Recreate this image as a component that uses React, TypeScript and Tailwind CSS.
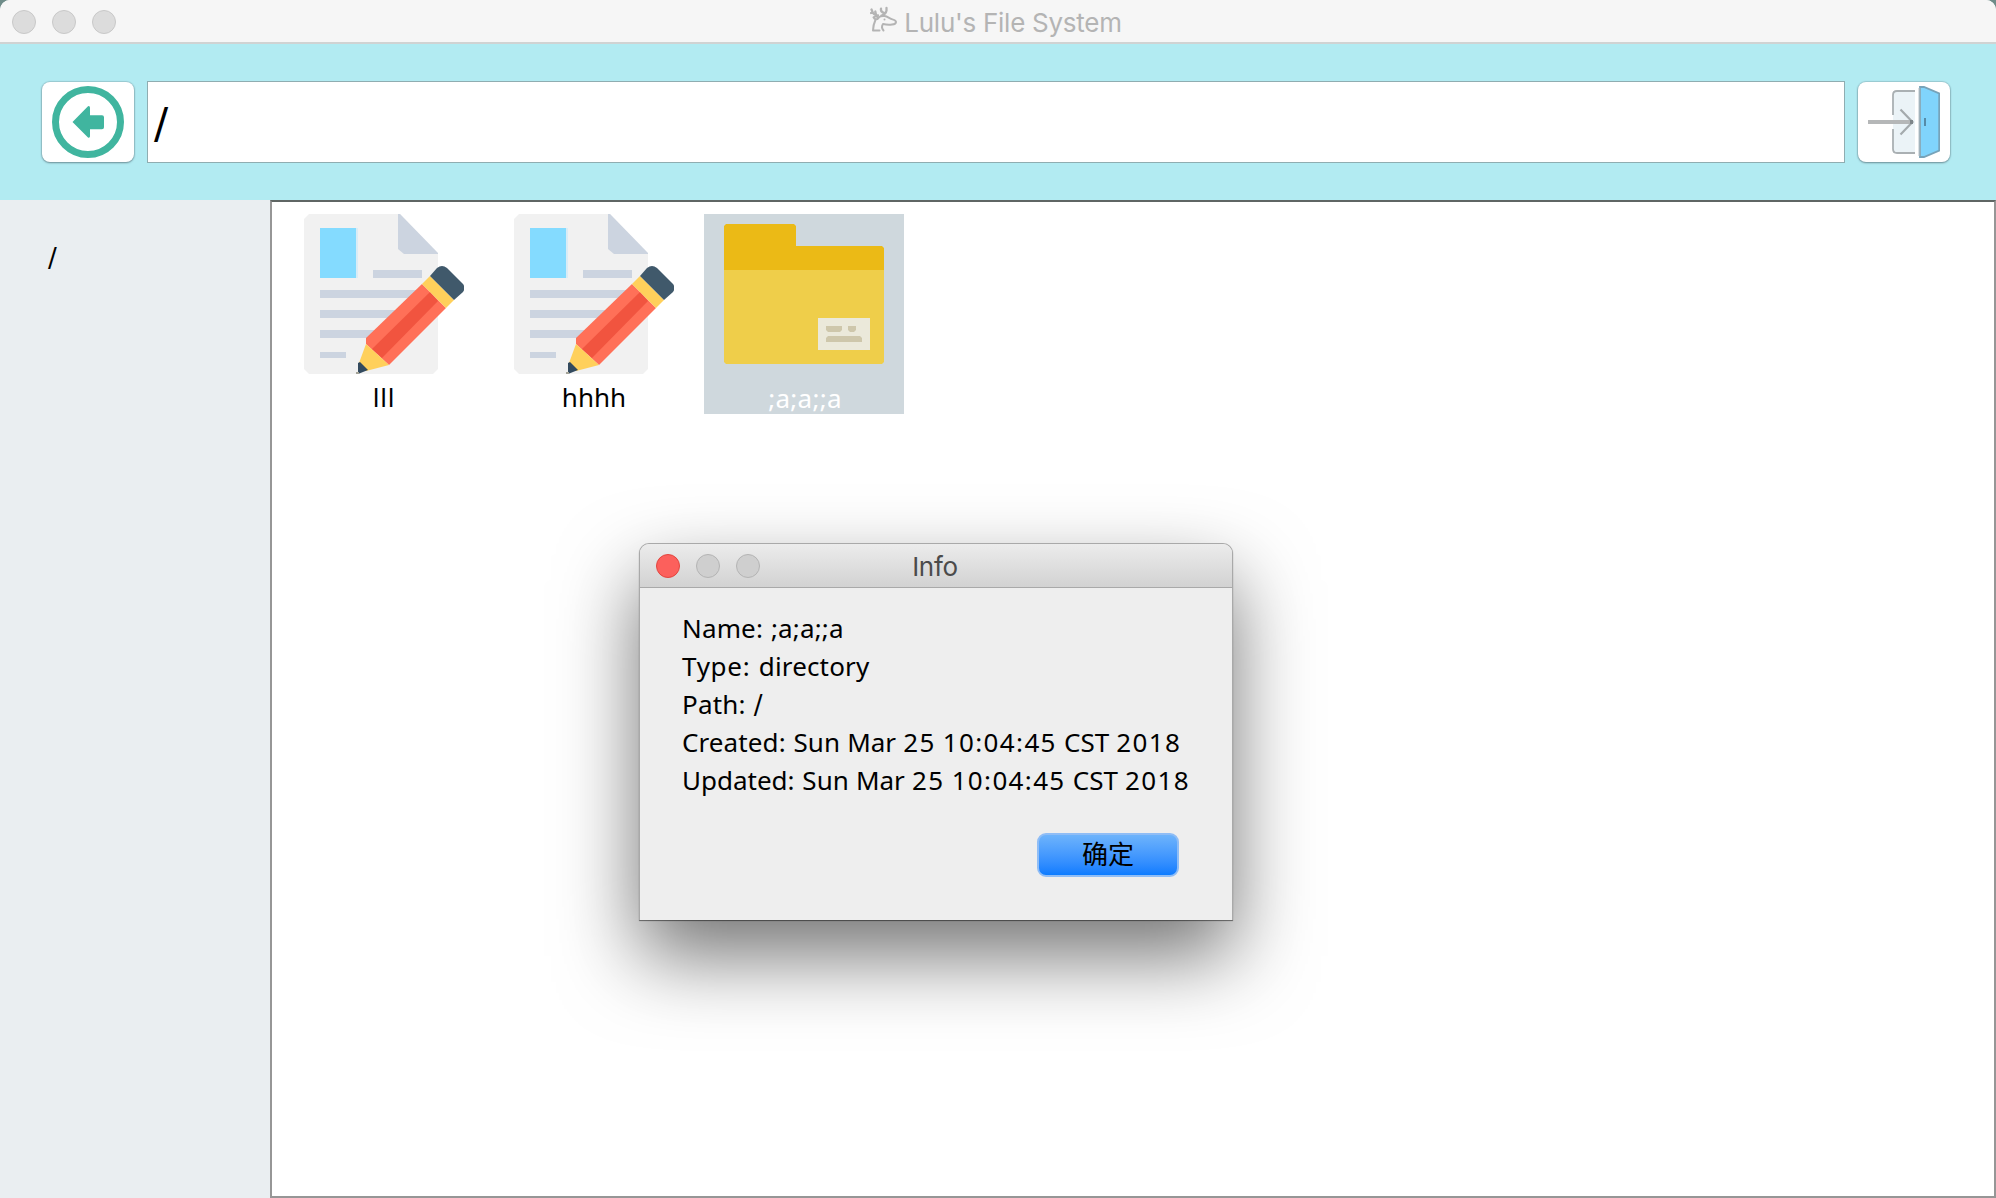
import React from "react";

const LABEL_FONT = "font-['Noto_Sans','Noto_Sans_CJK_SC',sans-serif]";

function DeerGlyph() {
  return (
    <svg width="27" height="27" viewBox="0 0 27 27" fill="none" stroke="#b4b4b4" strokeWidth="2" strokeLinecap="round" strokeLinejoin="round">
      <path d="M3 24.500c0-4 .8-7 2.600-11M3 24.500h6.500M13.500 24.500c-2.200-2.500-1.500-5-.5-6.500 3 .8 6 1 9 .6 2.500-.3 4-1.200 4-2.600 0-1.500-1.500-2-3.500-2.600-3-1-5-3-8-3.400-2.500-.3-4.500.3-6 1.500M8.500 12c-1.500 1.800-4 1.600-5-.6 1.300-1.400 3.600-1.200 5 .6" />
      <path d="M8 9.500C5.500 9 3 8 2.500 6L1.500 3.500M2.500 6.500 1 7M6 8.800 5.300 5.500M11.500 9.500c3-.7 4.500-2.500 5-5L16.500 2M14.500 7.200c-2.300-.7-4-2-3.500-4.500" strokeWidth="2.300" />
      <circle cx="14.500" cy="13.500" r="1" fill="#b4b4b4" stroke="none" />
    </svg>
  );
}

function BackIcon() {
  return (
    <svg width="72" height="72" viewBox="0 0 72 72">
      <circle cx="36" cy="36" r="32.500" fill="none" stroke="#40b59f" strokeWidth="7" />
      <path d="M20.500 36 36 20.200q2-.5 2 1.500v7.500h12q2 0 2 2v10q0 2-2 2H38v7q0 2-2 1.300Z" fill="#40b59f" />
    </svg>
  );
}

function ExitIcon() {
  return (
    <svg width="72" height="72" viewBox="0 0 72 72" fill="none">
      <path d="M25 5h22v62H25Z" fill="#ebf3f7" />
      <path d="M25 29V9q0-4 4-4h18M25 43v20q0 4 4 4h18" stroke="#aab0b3" strokeWidth="1.800" />
      <path d="M0 36h44" stroke="#b5b7b8" strokeWidth="4" />
      <path d="M32.500 23.500 44.500 36 32.500 48.500" stroke="#a4aaad" strokeWidth="2.200" />
      <path d="M42 34h3v4h-3Z" fill="#7e868a" />
      <path d="M52 1h4l15.200 6.500v57L56 71h-4Z" fill="#80d4fc" stroke="#77a3b9" strokeWidth="1.800" />
      <path d="M51.500 2v68" stroke="#a2b3bc" strokeWidth="1.800" />
      <path d="M57 32v8" stroke="#558ba8" strokeWidth="2" />
    </svg>
  );
}

function DocumentIcon() {
  return (
    <svg width="160" height="160" viewBox="0 0 160 160" className="block shrink-0">
      <path d="M5 0h91l38 40v115l-5 5H5l-5-5V5Z" fill="#f1f1f1" />
      <path d="M94 0h2l38 39v1h-34l-6-5Z" fill="#ccd4e0" />
      <path d="M16 14h38v50H16Z" fill="#d9ecf6" />
      <path d="M16 14h36v50H16Z" fill="#84dbff" />
      <path d="M69 56h49v8H69ZM16 76h106v8H16ZM16 96h84v8H16ZM16 116h62v8H16ZM16 138h26v6H16Z" fill="#ccd4e0" />
      <path d="M118 70 142 94 85 151 62 130V124Z" fill="#ff7058" />
      <path d="M126 78 134 87 78 144 68 135Z" fill="#f1543f" />
      <path d="M118 70 126 62 150 86 142 94ZM62 130 85 151 62 157 55 149Z" fill="#ffd05b" />
      <path d="M126 62 133 54q5-4 10 0l16 16q3 4 0 8L150 86Z" fill="#40596b" />
      <path d="M56 148 64 156 54 160 54 149Z" fill="#334a5e" />
      <path d="M52 158h3v2h-3Z" fill="#a4a397" />
    </svg>
  );
}

function FolderIcon() {
  return (
    <svg width="160" height="160" viewBox="0 0 160 160" className="block shrink-0">
      <path d="M2 0h68l2 2v20h86l2 2v24H0V2Z" fill="#ebba16" />
      <path d="M0 46h160v92l-2 2H2l-2-2Z" fill="#efce4a" />
      <path d="M94 94h52v32H94Z" fill="#ebe9da" />
      <path d="M102 102h16v4l-2 2h-12l-2-2ZM124 102h8v4l-2 2h-4l-2-2ZM104 112h32l2 2v4h-36v-4Z" fill="#cec7ab" />
    </svg>
  );
}

function FileItem({ name, labelClass }: { name: string; labelClass: string }) {
  return (
    <div className="flex h-[200px] w-[200px] flex-col items-center">
      <DocumentIcon />
      <span className={`mt-[6px] text-[26px] leading-[34px] text-black ${labelClass}`}>{name}</span>
    </div>
  );
}

const INFO: { label: string; value: string; labelClass: string }[] = [
  { label: "Name:", value: ";a;a;;a", labelClass: "tracking-[0.15px]" },
  { label: "Type:", value: "directory", labelClass: "tracking-[0.7px]" },
  { label: "Path:", value: "/", labelClass: "tracking-[0.2px]" },
  { label: "Created:", value: "Sun Mar 25 10:04:45 CST 2018", labelClass: "tracking-[0.1px]" },
  { label: "Updated:", value: "Sun Mar 25 10:04:45 CST 2018", labelClass: "" },
];

/* Digits get a little more room than the words around them. */
function InfoValue({ value }: { value: string }) {
  if (value === "/") return <span className="font-['DejaVu_Sans',sans-serif]">/</span>;
  const dated = /\d/.test(value);
  return (
    <span className={dated ? "[word-spacing:0.4px]" : "tracking-[0.15px]"}>
      {value.split(/(\d[\d:]*)/).map((part, i) => (
        <span key={i} className={/^\d/.test(part) ? "tracking-[1.35px]" : ""}>{part}</span>
      ))}
    </span>
  );
}

function InfoDialog() {
  return (
    <div className="absolute left-[639px] top-[543px] flex h-[377px] w-[594px] flex-col rounded-t-[10px] border border-b-0 border-[#a9a9a9] bg-[#eeeeee] shadow-[0_36px_80px_rgba(0,0,0,0.55),0_1px_1px_rgba(0,0,0,0.5)]">
      <div className="grid h-[44px] shrink-0 grid-cols-[1fr_auto_1fr] items-center rounded-t-[9px] border-b border-[#a9a9a9] bg-linear-to-b from-[#ececec] to-[#d2d2d2]">
        <div className="flex gap-4 pl-4">
          <span className="h-6 w-6 rounded-full border border-[#e2463f] bg-[#fc605c]" />
          <span className="h-6 w-6 rounded-full border border-[#b4b4b4] bg-[#cfcfcf]" />
          <span className="h-6 w-6 rounded-full border border-[#b4b4b4] bg-[#cfcfcf]" />
        </div>
        <span className="mr-[2px] pt-[3px] font-['Inter',sans-serif] text-[26px] leading-8 tracking-[-0.3px] text-[#4b4b4b]">Info</span>
      </div>
      <div className="pl-[42px] pt-[21px] text-[26px] text-black">
        {INFO.map(({ label, value, labelClass }) => (
          <p key={label} className="h-[38px] whitespace-pre leading-[38px] [word-spacing:1px]">
            <span className={labelClass}>{label} </span>
            <InfoValue value={value} />
          </p>
        ))}
      </div>
      <div className="mt-auto flex justify-end pb-[43px] pr-[53px]">
        <button className="h-[44px] w-[142px] rounded-[9px] border-2 border-[#8fbdf6] bg-linear-to-b from-[#6db3fb] to-[#0a7cff] pb-0.5 text-[26px] leading-none text-black">确定</button>
      </div>
    </div>
  );
}

export default function App() {
  return (
    <div className="h-[1198px] w-[1996px] overflow-hidden bg-[#6f8c89]">
      <div className={`relative flex h-full flex-col overflow-hidden rounded-t-[10px] bg-white ${LABEL_FONT}`}>
        <header className="grid h-[44px] shrink-0 grid-cols-[1fr_auto_1fr] items-center border-b-2 border-[#d0d3d3] bg-[#f6f6f6]">
          <div className="flex gap-4 pl-3 pt-[2px]">
            <span className="h-6 w-6 rounded-full border border-[#c8c8c8] bg-[#dcdcdc]" />
            <span className="h-6 w-6 rounded-full border border-[#c8c8c8] bg-[#dcdcdc]" />
            <span className="h-6 w-6 rounded-full border border-[#c8c8c8] bg-[#dcdcdc]" />
          </div>
          <div className="mr-[4px] flex items-center gap-[7px] pt-[4px] font-['Inter',sans-serif] text-[26px] leading-8 text-[#b4b4b4]">
            <span className="mt-[-8px]"><DeerGlyph /></span>
            <span className="tracking-[-0.27px]">Lulu's File System</span>
          </div>
        </header>

        <div className="flex h-[156px] shrink-0 items-start bg-[#b2ebf2] pl-[42px] pr-[46px] pt-[37px]">
          <button className="mt-px flex h-[80px] w-[92px] items-center justify-center rounded-[8px] bg-white shadow-[0_0_1px_1px_rgba(100,130,140,0.3),0_1px_2px_rgba(60,80,90,0.5)]">
            <BackIcon />
          </button>
          <div className="ml-[13px] flex h-[82px] flex-1 items-center border border-[#8fadb1] bg-white pl-[6px] pt-[3px] font-['DejaVu_Sans',sans-serif] text-[42px] leading-none text-black">/</div>
          <button className="ml-[13px] mt-px flex h-[80px] w-[92px] items-center justify-center rounded-[8px] bg-white shadow-[0_0_1px_1px_rgba(100,130,140,0.3),0_1px_2px_rgba(60,80,90,0.5)]">
            <ExitIcon />
          </button>
        </div>

        <div className="flex min-h-0 flex-1">
          <aside className="w-[270px] shrink-0 bg-[#eaeef1] pl-[48px] pt-[41px] font-['DejaVu_Sans',sans-serif] text-[26px] leading-[34px] text-black">/</aside>
          <main className="flex flex-1 items-start gap-[10px] border-2 border-[#969696] border-t-[#5f6664] bg-white pl-3 pt-3">
            <FileItem name="lll" labelClass="tracking-[0.8px]" />
            <FileItem name="hhhh" labelClass="" />
            <div className="flex h-[200px] w-[200px] flex-col items-center bg-[#cfd8dd] pt-[10px]">
              <FolderIcon />
              <span className="mt-[-1px] pl-[2px] text-[26px] leading-[30px] tracking-[0.3px] text-white">;a;a;;a</span>
            </div>
          </main>
        </div>

        <InfoDialog />
      </div>
    </div>
  );
}
